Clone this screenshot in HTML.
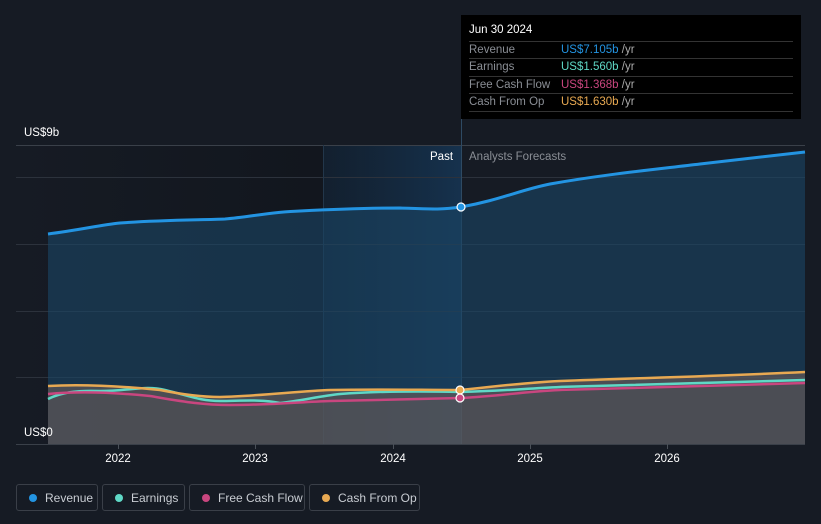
<!DOCTYPE html>
<html><head><style>
body{margin:0;width:821px;height:524px;background:#161b24;font-family:"Liberation Sans",sans-serif;overflow:hidden;position:relative}
.tt{position:absolute;left:461px;top:15px;width:340px;height:104px;background:#000;color:#fff;font-size:11.5px}
.tt .h{position:absolute;left:8px;top:9px}
.row{position:absolute;left:8px;width:324px;border-top:1px solid #333;height:17px;line-height:17px;color:#8a8e95}
.row span{position:absolute;left:92px}
.leg{position:absolute;top:484px;height:27px;border:1px solid #3a3f48;border-radius:3px;color:#c8ccd2;font-size:12px;line-height:26px;box-sizing:border-box}
.leg i{position:absolute;left:12px;top:9px;width:8px;height:8px;border-radius:50%}
</style></head><body>
<svg width="821" height="524" style="position:absolute;left:0;top:0">
<defs>
<linearGradient id="pg" x1="0" x2="1"><stop offset="0" stop-color="#161b24"/><stop offset="1" stop-color="#10141b"/></linearGradient>
<linearGradient id="hg" x1="0" x2="1"><stop offset="0" stop-color="#13263a" stop-opacity=".6"/><stop offset="1" stop-color="#17395a" stop-opacity=".8"/></linearGradient>
</defs>
<rect x="16" y="145" width="445" height="299" fill="url(#pg)"/>
<rect x="323" y="145" width="138" height="299" fill="url(#hg)"/>
<g stroke="#2c323c" stroke-width="1">
<line x1="16" y1="145.5" x2="805" y2="145.5" stroke="#3a4049"/>
<line x1="16" y1="177.5" x2="805" y2="177.5"/>
<line x1="16" y1="244.5" x2="805" y2="244.5"/>
<line x1="16" y1="311.5" x2="805" y2="311.5"/>
<line x1="16" y1="377.5" x2="805" y2="377.5"/>
<line x1="16" y1="444.5" x2="805" y2="444.5" stroke="#3a4049"/>
</g>
<line x1="461.5" y1="15" x2="461.5" y2="444" stroke="#2e4a63"/>
<line x1="323.5" y1="145" x2="323.5" y2="444" stroke="#22364a"/>
<path d="M48,234 C80,230 100,225 120,223 C160,220 200,220 225,219 C250,217 270,212 300,211 C340,209 370,208 400,208 C430,209 440,210 461,207 C500,200 520,190 550,184 C600,175 650,170 700,164 C750,158 780,155 805,152 L805,444 L48,444Z" fill="#1b4666" fill-opacity=".6"/>
<path d="M48,386 C80,384 120,386 160,390 C180,394 200,397 220,397 C260,396 300,391 330,390 C380,389 420,390 461,390 C500,386 520,383 560,381 C640,378 720,376 805,372 L805,444 L48,444Z" fill="#6e5f5a" fill-opacity=".6"/>
<path d="M48,234 C80,230 100,225 120,223 C160,220 200,220 225,219 C250,217 270,212 300,211 C340,209 370,208 400,208 C430,209 440,210 461,207 C500,200 520,190 550,184 C600,175 650,170 700,164 C750,158 780,155 805,152" fill="none" stroke="#2394e2" stroke-width="3"/>
<path d="M48,399 C60,393 75,390 100,391 C130,391 145,385 165,390 C190,396 200,401 220,401 C240,401 260,399 280,403 C300,401 320,396 340,394 C380,391 420,391 461,392 C500,391 520,389 560,387 C640,384 720,382 805,380" fill="none" stroke="#5fd8c6" stroke-width="2.5"/>
<path d="M48,394 C80,391 120,393 150,396 C180,401 200,405 230,405 C270,405 300,402 330,401 C380,400 420,399 461,398 C500,396 520,392 560,390 C640,387 720,385 805,383" fill="none" stroke="#c9467f" stroke-width="2.5"/>
<path d="M48,386 C80,384 120,386 160,390 C180,394 200,397 220,397 C260,396 300,391 330,390 C380,389 420,390 461,390 C500,386 520,383 560,381 C640,378 720,376 805,372" fill="none" stroke="#e8a952" stroke-width="2.5"/>
<circle cx="461" cy="207" r="4" fill="#2394e2" stroke="#fff" stroke-width="1.2"/>
<circle cx="460" cy="390" r="4" fill="#e8a952" stroke="#fff" stroke-width="1.2"/>
<circle cx="460" cy="398" r="4" fill="#c9467f" stroke="#fff" stroke-width="1.2"/>
<g fill="#fff" font-size="11.5" font-family="Liberation Sans,sans-serif">
<text x="24" y="136">US$9b</text>
<text x="24" y="436">US$0</text>
<text x="430" y="160">Past</text>
<text x="469" y="160" fill="#8a8e95">Analysts Forecasts</text>
<text x="118" y="462" text-anchor="middle">2022</text>
<text x="255" y="462" text-anchor="middle">2023</text>
<text x="393" y="462" text-anchor="middle">2024</text>
<text x="530" y="462" text-anchor="middle">2025</text>
<text x="667" y="462" text-anchor="middle">2026</text>
</g>
<g stroke="#4a5058"><line x1="118.5" y1="444" x2="118.5" y2="449"/><line x1="255.5" y1="444" x2="255.5" y2="449"/><line x1="393.5" y1="444" x2="393.5" y2="449"/><line x1="530.5" y1="444" x2="530.5" y2="449"/><line x1="667.5" y1="444" x2="667.5" y2="449"/></g>
</svg>
<div class="tt">
<div class="h">Jun 30 2024</div>
<div class="row" style="top:26px">Revenue<span style="color:#2394e2">US$7.105b <b style="font-weight:normal;color:#aaa">/yr</b></span></div>
<div class="row" style="top:43px">Earnings<span style="color:#5fd8c6">US$1.560b <b style="font-weight:normal;color:#aaa">/yr</b></span></div>
<div class="row" style="top:61px">Free Cash Flow<span style="color:#c9467f">US$1.368b <b style="font-weight:normal;color:#aaa">/yr</b></span></div>
<div class="row" style="top:78px">Cash From Op<span style="color:#e8a952">US$1.630b <b style="font-weight:normal;color:#aaa">/yr</b></span></div>
<div class="row" style="top:96px;height:0"></div>
</div>
<div class="leg" style="left:16px;width:82px"><i style="background:#2394e2"></i><span style="position:absolute;left:28px">Revenue</span></div>
<div class="leg" style="left:102px;width:83px"><i style="background:#5fd8c6"></i><span style="position:absolute;left:28px">Earnings</span></div>
<div class="leg" style="left:189px;width:116px"><i style="background:#c9467f"></i><span style="position:absolute;left:28px">Free Cash Flow</span></div>
<div class="leg" style="left:309px;width:111px"><i style="background:#e8a952"></i><span style="position:absolute;left:28px">Cash From Op</span></div>
</body></html>
